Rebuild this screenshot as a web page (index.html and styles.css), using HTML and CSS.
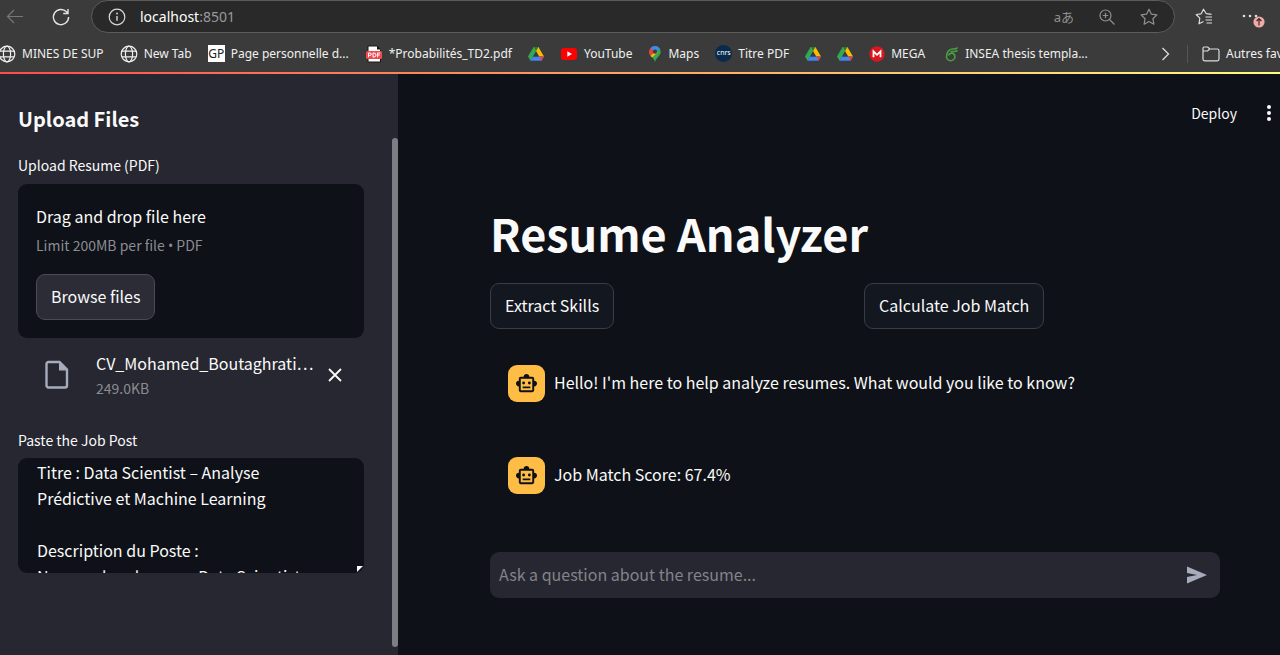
FILE: index.html
```html
<!DOCTYPE html>
<html lang="en">
<head>
<meta charset="utf-8">
<title>Resume Analyzer</title>
<link rel="stylesheet" href="styles.css">
</head>
<body>
<svg class="sprite" aria-hidden="true">
  <symbol id="globe" viewBox="0 0 18 18"><g fill="none" stroke="currentColor" stroke-width="1.2"><circle cx="9" cy="9" r="7.8"/><ellipse cx="9" cy="9" rx="3.6" ry="7.8"/><path d="M1.8 6.2h14.4M1.8 11.8h14.4"/></g></symbol>
  <symbol id="drive" viewBox="1 1 16 16"><path fill="#34a853" d="M6.6 2h4.8L5.6 12.2 3.5 15.8 1 11.6z"/><path fill="#fbbc04" d="M6.6 2h4.8L17 11.6h-4.8z"/><path fill="#4285f4" d="M6 11.6h11l-2.5 4.2h-11z"/><path fill="#ea4335" d="M12.2 11.6H17l-2.5 4.2z"/><path fill="#188038" d="M6.6 2h4.8L9 6.2z"/><path fill="#3b3b3b" d="M9 6.8l2.7 4.8H6.3z"/></symbol>
  <symbol id="bot" viewBox="0 0 24 24"><path fill="#0e1117" d="M20 9V7c0-1.100-.9-2-2-2h-3c0-1.660-1.340-3-3-3S9 3.340 9 5H6c-1.100 0-2 .9-2 2v2c-1.660 0-3 1.340-3 3s1.340 3 3 3v4c0 1.100.9 2 2 2h12c1.100 0 2-.9 2-2v-4c1.660 0 3-1.340 3-3s-1.340-3-3-3zm-2 10H6V7h12v12zM9 13a1.500 1.500 0 1 1 0-3 1.500 1.500 0 0 1 0 3zm6 0a1.500 1.500 0 1 1 0-3 1.500 1.500 0 0 1 0 3zm-7 2h8v2H8z"/></symbol>
</svg>

<header class="browser">
  <div class="toolbar">
    <button class="icon-button back" aria-label="Back"><svg width="18" height="18" viewBox="0 0 18 18"><path d="M17 8.500H1.500M8 2L1.500 8.500 8 15" fill="none" stroke="#777" stroke-width="1.200"/></svg></button>
    <button class="icon-button" aria-label="Reload"><svg width="20" height="20" viewBox="0 0 20 20"><path d="M17.600 10A7.600 7.600 0 1 1 15.500 4.800L17 6.300M17 2v4.500h-4.800" fill="none" stroke="#e4e4e4" stroke-width="1.400"/></svg></button>
    <div class="address">
      <svg width="18" height="18" viewBox="0 0 18 18"><circle cx="9" cy="9" r="7.800" fill="none" stroke="#d8d8d8" stroke-width="1.200"/><path d="M9 8v4.800" stroke="#d8d8d8" stroke-width="1.400"/><circle cx="9" cy="5.500" r=".9" fill="#d8d8d8"/></svg>
      <span class="url">localhost<span class="port">:8501</span></span>
      <span class="translate">aあ</span>
      <svg class="tool" width="18" height="18" viewBox="0 0 18 18"><g fill="none" stroke="#909090" stroke-width="1.200"><circle cx="7.500" cy="7.500" r="5.500"/><path d="M11.500 11.500l5 5M7.500 4.800v5.400M4.800 7.500h5.400"/></g></svg>
      <svg class="tool" width="18" height="18" viewBox="0 0 18 18"><path d="M9 1.200l2.400 5 5.500.7-4 3.800 1 5.500L9 13.500l-4.900 2.700 1-5.500-4-3.800 5.500-.7z" fill="none" stroke="#909090" stroke-width="1.200" stroke-linejoin="round"/></svg>
    </div>
    <button class="icon-button" aria-label="Favourites"><svg width="18" height="18" viewBox="0 0 18 18"><path d="M16.500 6.300l-5.200-.6L8.500 1.200 6.200 5.800l-5 .7 3.600 3.700-.8 5.600 4.500-2.300M10.500 9h6.500M10.500 12h6.500M11.500 15h5.500" fill="none" stroke="#ddd" stroke-width="1.200" stroke-linejoin="round"/></svg></button>
    <button class="icon-button more" aria-label="Browser menu"><svg width="24" height="22" viewBox="0 0 24 22"><g fill="#ddd"><circle cx="3" cy="10" r="1.300"/><circle cx="9" cy="10" r="1.300"/><circle cx="15" cy="10" r="1.300"/></g><circle cx="18" cy="16" r="5.600" fill="#f2aaa4"/><path d="M18 19.500v-7M15.600 15l2.400-2.500 2.400 2.500" fill="none" stroke="#3b2b2b" stroke-width="1.200"/></svg></button>
  </div>
  <nav class="bookmarks" aria-label="Bookmarks">
    <a href="#" class="first"><svg width="18" height="18"><use href="#globe"/></svg>MINES DE SUP</a>
    <a href="#"><svg width="18" height="18"><use href="#globe"/></svg>New Tab</a>
    <a href="#"><span class="gp">GP</span>Page personnelle d...</a>
    <a href="#"><svg width="18" height="18" viewBox="0 0 18 18"><path d="M3 1h9l3.500 3.500V17H3z" fill="#fff" stroke="#161616"/><path d="M12 1v3.500h3.500z" fill="#161616"/><rect x="1" y="6" width="16" height="8" rx="1.500" fill="#ef4b4f"/><path d="M3.500 12.200V8h1.600a1.200 1.200 0 0 1 0 2.400H3.500M8 8v4h1a2 2 0 0 0 0-4zM12.600 12.200V8h2.600M12.600 10h2.200" fill="none" stroke="#fff"/></svg>*Probabilités_TD2.pdf</a>
    <a href="#" aria-label="Drive"><svg width="16" height="16"><use href="#drive"/></svg></a>
    <a href="#"><svg width="18" height="18" viewBox="0 0 18 18"><rect x="1" y="3" width="16" height="12" rx="3" fill="#f00"/><path d="M7.300 6.300L12 9l-4.700 2.700z" fill="#fff"/></svg>YouTube</a>
    <a href="#"><svg width="14" height="18" viewBox="0 0 14 18"><path d="M7 1a5.700 5.700 0 0 1 5.700 5.700C12.700 11 8.200 12 7 17 6 12 1.300 11 1.300 6.700A5.700 5.700 0 0 1 7 1z" fill="#34a853"/><path d="M2.500 3.200A5.700 5.700 0 0 1 12 4L7 7z" fill="#4285f4"/><path d="M2.500 3.200L7 6.700l-4.400 4.200A6 6 0 0 1 2.500 3.200z" fill="#ea4335"/><path d="M7 6.700l-4.400 4.200 1.500 1.700L10 7z" fill="#fbbc04"/><circle cx="7" cy="6.700" r="2.100" fill="#3b3b3b"/></svg>Maps</a>
    <a href="#"><span class="cnrs">cnrs</span>Titre PDF</a>
    <a href="#" aria-label="Drive"><svg width="16" height="16"><use href="#drive"/></svg></a>
    <a href="#" aria-label="Drive"><svg width="16" height="16"><use href="#drive"/></svg></a>
    <a href="#"><svg width="16" height="18" viewBox="0 0 16 18"><circle cx="8" cy="9" r="7.700" fill="#d9171e"/><path d="M4.500 12.200V6.300L8 9.800l3.500-3.500v5.900" fill="none" stroke="#fff" stroke-width="1.800"/></svg>MEGA</a>
    <a href="#" class="thesis"><svg width="14" height="18" viewBox="0 0 14 18"><path d="M12.500 2.500C11 4.500 9.500 4 7.500 4 4 4 1.500 7.500 1.500 11.500a4.200 4.200 0 1 0 8.400 0c0-4.200-5.500-4.200-6.500-1M5.500 6.800C8 5.800 9.500 7.500 12.500 5.500" fill="none" stroke="#47a141" stroke-width="1.600"/></svg>INSEA thesis templa...</a>
    <button class="icon-button overflow" aria-label="More bookmarks"><svg width="10" height="16" viewBox="0 0 10 16"><path d="M1.500 2l6 6-6 6" fill="none" stroke="#ddd" stroke-width="1.300"/></svg></button>
    <a href="#" class="others"><svg width="18" height="18" viewBox="0 0 18 18"><path d="M1 5.500V3.300C1 2.600 1.600 2 2.300 2h3.400l2 2h7.500c1 0 1.800.8 1.800 1.800V14c0 1-.8 1.800-1.800 1.800H2.800C1.800 15.800 1 15 1 14zM1 6h4.500l2.200-2" fill="none" stroke="#ddd" stroke-width="1.200"/></svg>Autres fav</a>
  </nav>
</header>

<div class="decoration"></div>

<div class="app">
  <aside class="sidebar">
    <h2>Upload Files</h2>
    <label class="field-label" for="resume">Upload Resume (PDF)</label>
    <section class="dropzone">
      <p>Drag and drop file here</p>
      <p class="hint limit">Limit 200MB per file <span class="dot">•</span> PDF</p>
      <button class="button browse" id="resume">Browse files</button>
    </section>
    <div class="file">
      <svg width="24" height="30" viewBox="0 0 24 30"><path d="M3.500 2h11L22 9.500v16c0 1.100-.9 2-2 2H3.500c-1.100 0-2-.9-2-2V4c0-1.100.9-2 2-2z" fill="none" stroke="#a6abbd" stroke-width="2.400"/><path d="M14 2v8.500h8.500z" fill="#a6abbd"/></svg>
      <div class="file-info">
        <div class="file-name">CV_Mohamed_Boutaghrati…</div>
        <div class="hint">249.0KB</div>
      </div>
      <button class="icon-button" aria-label="Remove file"><svg width="16" height="16" viewBox="0 0 16 16"><path d="M2 2l12 12M14 2L2 14" stroke="#fafafa" stroke-width="1.800"/></svg></button>
    </div>
    <label class="field-label" for="job">Paste the Job Post</label>
    <div class="textarea-wrap">
      <textarea id="job" spellcheck="false">Titre : Data Scientist – Analyse Prédictive et Machine Learning

Description du Poste :
Nous recherchons un Data Scientist</textarea>
      <span class="grip"></span>
    </div>
    <div class="scroll-thumb"></div>
  </aside>

  <main class="main">
    <div class="top-actions">
      <button class="deploy">Deploy</button>
      <button class="icon-button" aria-label="Menu"><svg width="6" height="18" viewBox="0 0 6 18"><g fill="#fafafa"><circle cx="3" cy="3" r="2"/><circle cx="3" cy="9" r="2"/><circle cx="3" cy="15" r="2"/></g></svg></button>
    </div>
    <div class="content">
      <h1>Resume Analyzer</h1>
      <div class="columns">
        <div><button class="button">Extract Skills</button></div>
        <div><button class="button">Calculate Job Match</button></div>
      </div>
      <div class="messages">
        <div class="message"><span class="avatar"><svg width="23" height="23"><use href="#bot"/></svg></span><p>Hello! I'm here to help analyze resumes. What would you like to know?</p></div>
        <div class="message"><span class="avatar"><svg width="23" height="23"><use href="#bot"/></svg></span><p>Job Match Score: 67.4%</p></div>
      </div>
      <form class="chat">
        <input type="text" aria-label="Question" placeholder="Ask a question about the resume...">
        <button type="button" class="icon-button" aria-label="Send"><svg width="22" height="20" viewBox="0 0 22 20"><path d="M1 1.500L21 10 1 18.500v-6.500L11 10 1 8z" fill="#a6abbd"/></svg></button>
      </form>
    </div>
  </main>
</div>
</body>
</html>
```

FILE: styles.css
```css
* {
  box-sizing: border-box;
}

body {
  margin: 0;
  height: 100vh;
  display: flex;
  flex-direction: column;
  overflow: hidden;
  background: #0e1117;
  color: #fafafa;
  font-family: "Noto Sans CJK SC", "Liberation Sans", sans-serif;
  font-size: 16px;
  line-height: 26px;
}

h1, h2, p {
  margin: 0;
}

button, input, textarea {
  font: inherit;
  color: inherit;
}

svg {
  display: block;
  flex: none;
}

.sprite {
  position: absolute;
  width: 0;
  height: 0;
}

.icon-button {
  display: flex;
  padding: 0;
  border: 0;
  background: none;
}

/* Browser chrome */
.browser {
  flex: none;
  background: #3b3b3b;
  color: #f0f0f0;
  font-family: "Noto Sans", "Noto Sans CJK JP", sans-serif;
  font-size: 12px;
  line-height: 18px;
}

.toolbar {
  display: flex;
  align-items: center;
  gap: 20px;
  height: 33px;
  padding: 0 15px 0 6px;
}

.back {
  margin-right: 7px;
}

.more {
  margin-left: 8px;
}

.address {
  flex: 1;
  display: flex;
  align-items: center;
  height: 33px;
  padding: 0 16px;
  border: 1px solid #5c5c5c;
  border-radius: 17px;
  background: #292929;
}

.url {
  flex: 1;
  margin-left: 14px;
  color: #fff;
  font-size: 14px;
}

.port {
  color: #999;
}

.translate {
  color: #909090;
  font-size: 13px;
}

.tool {
  margin-left: 24px;
}

.bookmarks {
  display: flex;
  align-items: center;
  gap: 16px;
  height: 39px;
  padding-top: 2px;
  overflow: hidden;
  white-space: nowrap;
}

.bookmarks a {
  flex: none;
  display: flex;
  align-items: center;
  gap: 6px;
  color: inherit;
  text-decoration: none;
}

.bookmarks .first {
  margin-left: -2px;
}

.bookmarks .thesis {
  margin-left: 4px;
}

.gp {
  width: 17px;
  height: 17px;
  background: #fff;
  color: #222;
  font-size: 12px;
  line-height: 17px;
  text-align: center;
}

.cnrs {
  width: 17px;
  height: 17px;
  border-radius: 50%;
  background: #0a2a4d;
  color: #fff;
  font-size: 7px;
  line-height: 15px;
  text-align: center;
}

.overflow {
  margin-left: auto;
}

.bookmarks .others {
  width: 93px;
  padding-left: 14px;
  border-left: 1px solid #555;
}

.decoration {
  flex: none;
  height: 2px;
  background: linear-gradient(90deg, #ff4b4b, #fffd80);
}

/* App */
.app {
  flex: 1;
  min-height: 0;
  display: flex;
}

.sidebar {
  position: relative;
  flex: none;
  width: 398px;
  padding: 31px 34px 0 18px;
  background: #262730;
}

.scroll-thumb {
  position: absolute;
  top: 64px;
  right: 0;
  bottom: 8px;
  width: 6px;
  border-radius: 3px;
  background: #7d7e84;
}

h2 {
  font-size: 20px;
  line-height: 28px;
  font-weight: 700;
}

.field-label {
  display: block;
  font-size: 14px;
  line-height: 22px;
}

h2 + .field-label {
  margin-top: 21px;
}

.dropzone {
  margin-top: 8px;
  padding: 19px 18px 18px;
  border-radius: 9px;
  background: #0e1117;
}

.hint {
  color: #8b8c92;
  font-size: 14px;
  line-height: 24px;
}

.limit {
  margin-top: 4px;
}

.dot {
  font-family: "Open Sans", sans-serif;
}

.button {
  height: 46px;
  padding: 0 14px 2px;
  border: 1px solid #3b3d45;
  border-radius: 9px;
  background: #131720;
}

.browse {
  display: block;
  margin-top: 16px;
  border-color: #4a4b54;
  background: #2b2c36;
}

.file {
  display: flex;
  align-items: center;
  margin: 12px 0 29px;
  padding: 0 21px 0 27px;
}

.file-info {
  flex: 1;
  min-width: 0;
  margin-left: 27px;
}

.textarea-wrap {
  position: relative;
  margin-top: 7px;
}

textarea {
  display: block;
  width: 100%;
  height: 115px;
  padding: 1px 34px 0 19px;
  border: 0;
  border-radius: 9px;
  background: #0e1117;
  line-height: 26px;
  resize: none;
  overflow: hidden;
  outline: 0;
}

.grip {
  position: absolute;
  right: 1px;
  bottom: 1px;
  border-top: 6px solid #fafafa;
  border-right: 6px solid transparent;
}

.main {
  flex: 1;
  min-width: 0;
  display: flex;
  flex-direction: column;
}

.top-actions {
  display: flex;
  align-items: center;
  justify-content: flex-end;
  gap: 29px;
  padding: 26px 8px 0 0;
}

.deploy {
  padding: 0;
  border: 0;
  background: none;
  font-size: 14px;
}

.content {
  flex: 1;
  display: flex;
  flex-direction: column;
  padding: 81px 60px 57px 92px;
}

h1 {
  font-size: 45px;
  line-height: 52px;
  font-weight: 700;
}

.columns {
  display: grid;
  grid-template-columns: 1fr 1fr;
  gap: 18px;
  margin-top: 24px;
}

.messages {
  display: grid;
  gap: 55px;
  margin-top: 36px;
  padding: 0 18px;
}

.message {
  display: flex;
  align-items: center;
  gap: 9px;
}

.message p {
  padding-bottom: 3px;
}

.avatar {
  display: grid;
  place-items: center;
  width: 37px;
  height: 37px;
  border-radius: 9px;
  background: #ffbd45;
}

.chat {
  display: flex;
  align-items: center;
  height: 46px;
  margin-top: auto;
  padding: 0 12px 0 9px;
  border-radius: 9px;
  background: #262730;
}

.chat input {
  flex: 1;
  min-width: 0;
  padding: 0 0 2px;
  border: 0;
  outline: 0;
  background: none;
}

.chat input::placeholder {
  color: #82838b;
  opacity: 1;
}
```
